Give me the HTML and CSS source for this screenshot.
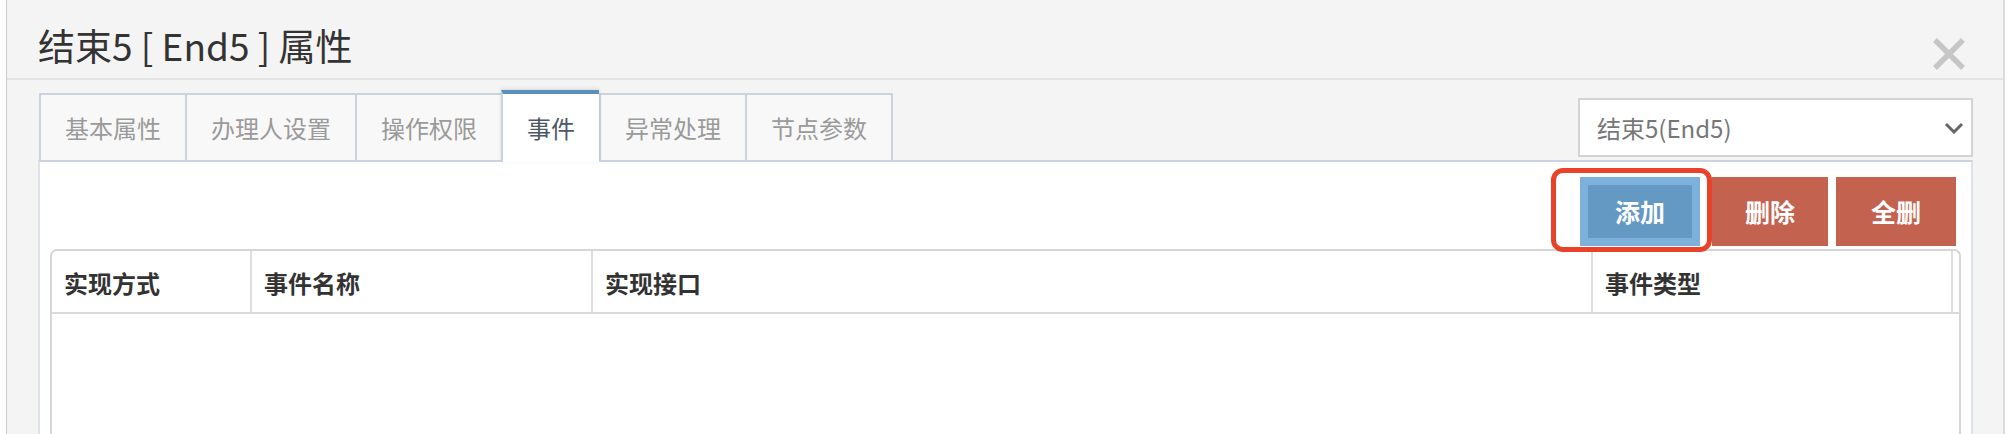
FILE: index.html
```html
<!DOCTYPE html>
<html lang="zh-CN">
<head>
<meta charset="utf-8">
<title>结束5 属性</title>
<link rel="stylesheet" href="styles.css">
</head>
<body>
<div class="page">
  <div class="modal">
    <div class="modal-header">
      <h1 class="title">结束5 [ End5 ] 属性</h1>
      <svg class="close" width="34" height="34" viewBox="0 0 34 34" aria-label="关闭">
        <path d="M3 3 L31 31 M31 3 L3 31" stroke="#c6c6c6" stroke-width="5.5" fill="none"/>
      </svg>
    </div>
    <div class="modal-body">
      <div class="tabbar">
        <ul class="tabs">
          <li class="tab">基本属性</li>
          <li class="tab">办理人设置</li>
          <li class="tab">操作权限</li>
          <li class="tab active">事件</li>
          <li class="tab">异常处理</li>
          <li class="tab last">节点参数</li>
        </ul>
        <div class="select">
          <span class="select-text">结束5(End5)</span>
          <svg class="chevron" width="20" height="12" viewBox="0 0 20 12">
            <path d="M2 2 L10 10 L18 2" stroke="#666" stroke-width="3" fill="none"/>
          </svg>
        </div>
      </div>
      <div class="panel">
        <div class="toolbar">
          <div class="btn-wrap">
            <button class="btn btn-add">添加</button>
            <span class="highlight"></span>
          </div>
          <button class="btn btn-danger">删除</button>
          <button class="btn btn-danger btn-wide">全删</button>
        </div>
        <div class="table">
          <div class="thead">
            <div class="th">实现方式</div>
            <div class="th">事件名称</div>
            <div class="th">实现接口</div>
            <div class="th">事件类型</div>
            <div class="th gutter"></div>
          </div>
          <div class="tbody"></div>
        </div>
      </div>
    </div>
  </div>
</div>
</body>
</html>
```

FILE: styles.css
```css
* { box-sizing: border-box; }
html, body {
  margin: 0;
  padding: 0;
  background: #ffffff;
  height: 434px;
  overflow: hidden;
  font-family: "Noto Sans CJK SC", "PingFang SC", "Noto Sans", sans-serif;
}
.page {
  display: flex;
  padding-left: 6px;
  height: 434px;
}
.modal {
  width: 1999px;
  height: 434px;
  background: #f4f4f4;
  border-left: 1px solid #c9c9c9;
  border-right: 2px solid #dcdcdc;
  display: flex;
  flex-direction: column;
}
.modal-header {
  height: 80px;
  border-bottom: 2px solid #e3e3e3;
  display: flex;
  justify-content: space-between;
  align-items: flex-start;
  padding: 0 37px 0 31px;
}
.title {
  margin: 18px 0 0 0;
  font-size: 37px;
  line-height: 54px;
  font-weight: 400;
  color: #333333;
}
.close {
  margin-top: 37px;
  display: block;
}
.modal-body {
  flex: 1;
  padding: 0 30px 0 31px;
  display: flex;
  flex-direction: column;
}
.tabbar {
  display: flex;
  justify-content: space-between;
  align-items: flex-end;
  padding: 10px 0 0 1px;
}
.tabs {
  list-style: none;
  margin: 0;
  padding: 0;
  display: flex;
  align-items: flex-end;
}
.tab {
  height: 67px;
  padding: 0 24px;
  background: #f8f8f8;
  border-top: 2px solid #cad4e0;
  border-left: 2px solid #cad4e0;
  font-size: 24px;
  line-height: 65px;
  color: #9a9a9a;
  white-space: nowrap;
}
.tab.last {
  border-right: 2px solid #cad4e0;
}
.tab.active {
  position: relative;
  z-index: 1;
  height: 72px;
  margin-bottom: -2px;
  background: #ffffff;
  border-top: 4px solid #5b8ebd;
  line-height: 68px;
  color: #4d5766;
  box-shadow: 0 -1px 4px rgba(0, 0, 0, 0.12);
}
.select {
  width: 395px;
  height: 59px;
  margin-bottom: 3px;
  background: #ffffff;
  border: 2px solid #d4d4d4;
  display: flex;
  align-items: center;
  justify-content: space-between;
  padding: 0 7px 0 17px;
}
.select-text {
  font-size: 24px;
  color: #777777;
}
.chevron { display: block; }
.panel {
  flex: 1;
  background: #ffffff;
  border-top: 2px solid #cad4e0;
  border-left: 2px solid #dde2e8;
  border-right: 2px solid #dde2e8;
  padding: 15px 10px 0 10px;
  display: flex;
  flex-direction: column;
}
.toolbar {
  display: flex;
  justify-content: flex-end;
  gap: 8px;
  padding-right: 5px;
}
.btn-wrap {
  position: relative;
  margin-right: 4px;
}
.btn {
  display: block;
  height: 69px;
  border: 0;
  margin: 0;
  font-family: inherit;
  font-size: 25px;
  font-weight: 700;
  color: #ffffff;
  padding: 0 33px;
  line-height: 69px;
}
.btn-add {
  background: #6399c3;
  border: 8px solid #7db1dc;
  padding: 0 27px;
  line-height: 53px;
}
.btn-danger {
  background: #c3624f;
}
.btn-wide {
  padding: 0 35px;
}
.highlight {
  position: absolute;
  left: -29px;
  top: -9px;
  width: 161px;
  height: 84px;
  border: 5px solid #e8432a;
  border-radius: 12px;
  pointer-events: none;
}
.table {
  margin-top: 3px;
  flex: 1;
  border: 2px solid #d6d6d6;
  border-bottom: 0;
  border-radius: 7px 7px 0 0;
  display: flex;
  flex-direction: column;
}
.thead {
  display: grid;
  grid-template-columns: 200px 341px 1000px 360px 6px;
  height: 63px;
  border-bottom: 2px solid #dadada;
}
.th {
  border-right: 2px solid #dedede;
  padding: 3px 0 0 12px;
  font-size: 24px;
  line-height: 58px;
  font-weight: 700;
  color: #333333;
}
.th.gutter {
  border-right: 0;
  padding: 0;
}
.tbody {
  flex: 1;
}
```
